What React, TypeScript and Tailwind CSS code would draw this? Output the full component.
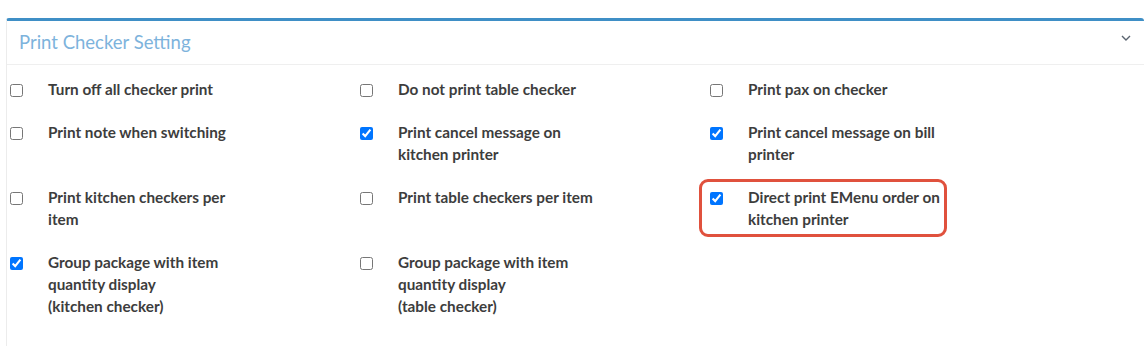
import React from "react";

type Item = { lines: string[]; checked: boolean; highlight?: boolean };

const items: (Item | null)[] = [
  { lines: ["Turn off all checker print"], checked: false },
  { lines: ["Do not print table checker"], checked: false },
  { lines: ["Print pax on checker"], checked: false },
  { lines: ["Print note when switching"], checked: false },
  { lines: ["Print cancel message on", "kitchen printer"], checked: true },
  { lines: ["Print cancel message on bill", "printer"], checked: true },
  { lines: ["Print kitchen checkers per", "item"], checked: false },
  { lines: ["Print table checkers per item"], checked: false },
  { lines: ["Direct print EMenu order on", "kitchen printer"], checked: true, highlight: true },
  { lines: ["Group package with item", "quantity display", "(kitchen checker)"], checked: true },
  { lines: ["Group package with item", "quantity display", "(table checker)"], checked: false },
  null,
];

function CheckItem({ item }: { item: Item }) {
  return (
    <label className="relative flex items-start">
      {item.highlight && (
        <span className="absolute left-[-11px] top-[-7px] w-[248px] h-[58px] rounded-[9px] border-[3px] border-[#e0513d] pointer-events-none" />
      )}
      <input
        type="checkbox"
        readOnly
        checked={item.checked}
        className="m-0 mt-[6px] w-[13px] h-[13px] shrink-0"
      />
      <span className="ml-[25px] text-[15.3px] leading-[22px] font-bold text-[#3d3d3d]">
        {item.lines.map((l, i) => (
          <React.Fragment key={i}>
            {i > 0 && <br />}
            {l}
          </React.Fragment>
        ))}
      </span>
    </label>
  );
}

export default function App() {
  return (
    <div className="w-[1146px] h-[346px] bg-white overflow-hidden pt-[18px] pl-[6px]" style={{ fontFamily: "Lato, 'Liberation Sans', sans-serif" }}>
      <div className="w-[1138px] h-[340px] border-t-[3px] border-t-[#3f8fc6] border-l border-l-[#ececec] rounded-t-[3px] bg-white">
        <div className="h-[44px] flex items-center justify-between pl-[12px] pr-[12px] border-b border-[#efefef]">
          <span className="text-[18.5px] text-[#7db3dc]">Print Checker Setting</span>
          <svg width="10" height="6" viewBox="0 0 10 6" className="mr-[1px] mt-[-10px]">
            <path d="M1 1l4 4 4-4" fill="none" stroke="#5a6470" strokeWidth="1.4" />
          </svg>
        </div>
        <div className="grid grid-cols-[350px_350px_350px] gap-y-[21px] pl-[3px] pt-[13px]">
          {items.map((it, i) => (it ? <CheckItem key={i} item={it} /> : <div key={i} />))}
        </div>
      </div>
    </div>
  );
}
